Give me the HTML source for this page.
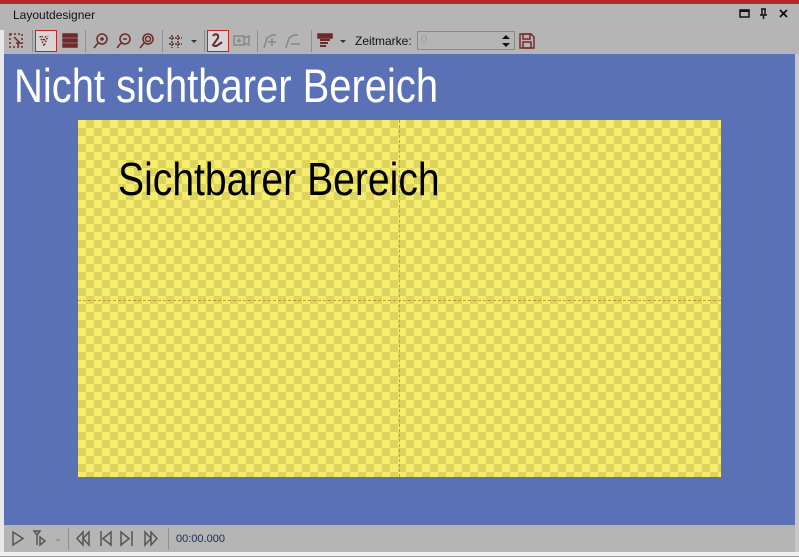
<!DOCTYPE html>
<html><head><meta charset="utf-8"><style>
*{margin:0;padding:0;box-sizing:border-box}
body{width:799px;height:557px;background:#b5b5b5;position:relative;overflow:hidden;font-family:"Liberation Sans",sans-serif}
.abs{position:absolute}
.red{left:0;top:0;width:799px;height:4px;background:#b22a2d}
.title{left:13px;top:8px;font-size:12px;color:#111}
.blue{left:4px;top:54px;width:791px;height:471px;background:#5a72b5}
.yel{left:78px;top:120px;width:643px;height:357px;background-color:#f4ec6a;
background-image:linear-gradient(45deg,#ddd45f 25%,transparent 25%,transparent 75%,#ddd45f 75%),linear-gradient(45deg,#ddd45f 25%,transparent 25%,transparent 75%,#ddd45f 75%);
background-size:16px 16px;background-position:0 0,8px 8px}
.vl{left:321px;top:0;width:1px;height:357px;border-left:1px dashed #c99a30}
.hl{left:0;top:180px;width:643px;height:1px;border-top:1px dashed #c99a30}
.big{left:14px;top:58px;font-size:47px;color:#fff;white-space:nowrap;transform-origin:0 0;transform:scaleX(0.85)}
.small{left:118px;top:152px;font-size:46px;color:#000;white-space:nowrap;transform-origin:0 0;transform:scaleX(0.85)}
.sep{width:1px;height:22px;background:#8f8f8f;top:30px}
.sep2{width:1px;height:22px;background:#8f8f8f;top:528px}
.bottomwhite{left:0;top:552px;width:799px;height:5px;background:#f0f0f0;border-bottom:1px solid #999}
.rb{left:795px;top:54px;width:4px;height:498px;background:#c8c8c8}
.lb{left:0;top:30px;width:4px;height:522px;background:#e8e8e8}
.sel{border:1px solid #c0262b;width:22px;height:22px;background:#d6d6d6}
</style></head><body>
<div class="abs red"></div>
<div class="abs lb"></div>
<div class="abs title">Layoutdesigner</div>
<svg class="abs" style="left:736px;top:8px" width="60" height="12" viewBox="0 0 60 12">
<rect x="4" y="2" width="9" height="7" fill="none" stroke="#111" stroke-width="1.5"/><rect x="4" y="2" width="9" height="2" fill="#111"/>
<path d="M25 1h5M26 1v6M29 1v6M24 7h7M27.5 7v4" stroke="#111" stroke-width="1.5" fill="none"/>
<path d="M44 2l7 7M51 2l-7 7" stroke="#111" stroke-width="1.8"/>
</svg>
<div class="abs sel" style="left:35px;top:30px"></div>
<div class="abs sel" style="left:207px;top:30px"></div>
<svg class="abs" style="left:0;top:28px" width="520" height="26" viewBox="0 0 520 26" fill="none" stroke="#6e2a2a" stroke-width="1.5">
<rect x="10" y="6" width="12" height="13" stroke-dasharray="2 2"/><path d="M14 9l6 6-3 0 2 3" />
<path d="M40 8l4 10 4-10M42 8l2 5 2-5" stroke-dasharray="1.5 1.5"/>
<rect x="63" y="6" width="14" height="3" fill="#6e2a2a"/><rect x="63" y="11" width="14" height="3" fill="#6e2a2a"/><rect x="63" y="16" width="14" height="3" fill="#6e2a2a"/>
<circle cx="102" cy="11" r="5"/><path d="M98 15l-4 5M100 11h4M102 9v4"/>
<circle cx="125" cy="11" r="5"/><path d="M121 15l-4 5M123 11h4"/>
<circle cx="148" cy="11" r="5"/><circle cx="148" cy="11" r="2.5"/><path d="M144 15l-4 5"/>
<path d="M172 7v13M178 7v13M169 10h13M169 16h13" stroke-dasharray="2 1"/>
<path d="M191 12l3 3 3-3z" fill="#333" stroke="none"/>
<path d="M213 8c2-3 6-2 5 2l-5 7c2 2 5 1 7-2M222 14l-2 2" stroke-width="2"/>
<rect x="234" y="8" width="10" height="9" stroke="#888"/><path d="M244 10l5-2v9l-5-2M237 12.5h4M239 10.5v4" stroke="#888"/>
<path d="M264 20l3-10 5-3h4M268 14h8M272 10v8" stroke="#888"/>
<path d="M286 20l3-10 5-3h4M291 16h9" stroke="#888"/>
<rect x="318" y="6" width="14" height="4" fill="#6e2a2a"/><path d="M320 12h10M320 15h8M320 18h6" stroke-width="2"/>
<path d="M340 12l3 3 3-3z" fill="#333" stroke="none"/>
</svg>
<div class="abs sep" style="left:32px"></div>
<div class="abs sep" style="left:85px"></div>
<div class="abs sep" style="left:162px"></div>
<div class="abs sep" style="left:204px"></div>
<div class="abs sep" style="left:257px"></div>
<div class="abs sep" style="left:311px"></div>
<div class="abs" style="left:355px;top:34px;font-size:12px;color:#111">Zeitmarke:</div>
<div class="abs" style="left:417px;top:31px;width:98px;height:19px;border:1px solid #8a8a8a;font-size:11px;color:#999;padding:2px 3px">0</div>
<svg class="abs" style="left:500px;top:33px" width="12" height="16"><path d="M2 6l4-4 4 4zM2 10l4 4 4-4z" fill="#111"/></svg>
<svg class="abs" style="left:518px;top:32px" width="18" height="18" fill="none" stroke="#7a2a2a" stroke-width="1.5"><path d="M2 2h11l3 3v11H2z"/><rect x="5" y="2" width="7" height="5"/><rect x="5" y="10" width="8" height="6"/></svg>
<div class="abs blue"></div>
<div class="abs rb"></div>
<div class="abs big">Nicht sichtbarer Bereich</div>
<div class="abs yel"><div class="abs vl"></div><div class="abs hl"></div></div>
<div class="abs small">Sichtbarer Bereich</div>
<svg class="abs" style="left:0;top:526px" width="170" height="26" fill="none" stroke="#555" stroke-width="1.5">
<path d="M13 6v13l10-6.5z"/>
<path d="M34 5h6l-3 4zM37 9v10M40 11v8l5-4z"/>
<path d="M55 13l3 3 3-3" stroke="#999" fill="#999" stroke-width="0"/>
<path d="M83 6l-6 6.5 6 6.5zM89 6l-6 6.5 6 6.5z"/>
<path d="M101 5v15M111 6l-8 6.5 8 6.5z"/>
<path d="M121 6l8 6.5-8 6.5zM132 5v15"/>
<path d="M145 6l6 6.5-6 6.5zM151 6l6 6.5-6 6.5z"/>
</svg>
<div class="abs sep2" style="left:68px"></div>
<div class="abs sep2" style="left:168px"></div>
<div class="abs" style="left:176px;top:533px;font-size:11px;color:#1a2a5a">00:00.000</div>
<div class="abs bottomwhite"></div>
</body></html>
